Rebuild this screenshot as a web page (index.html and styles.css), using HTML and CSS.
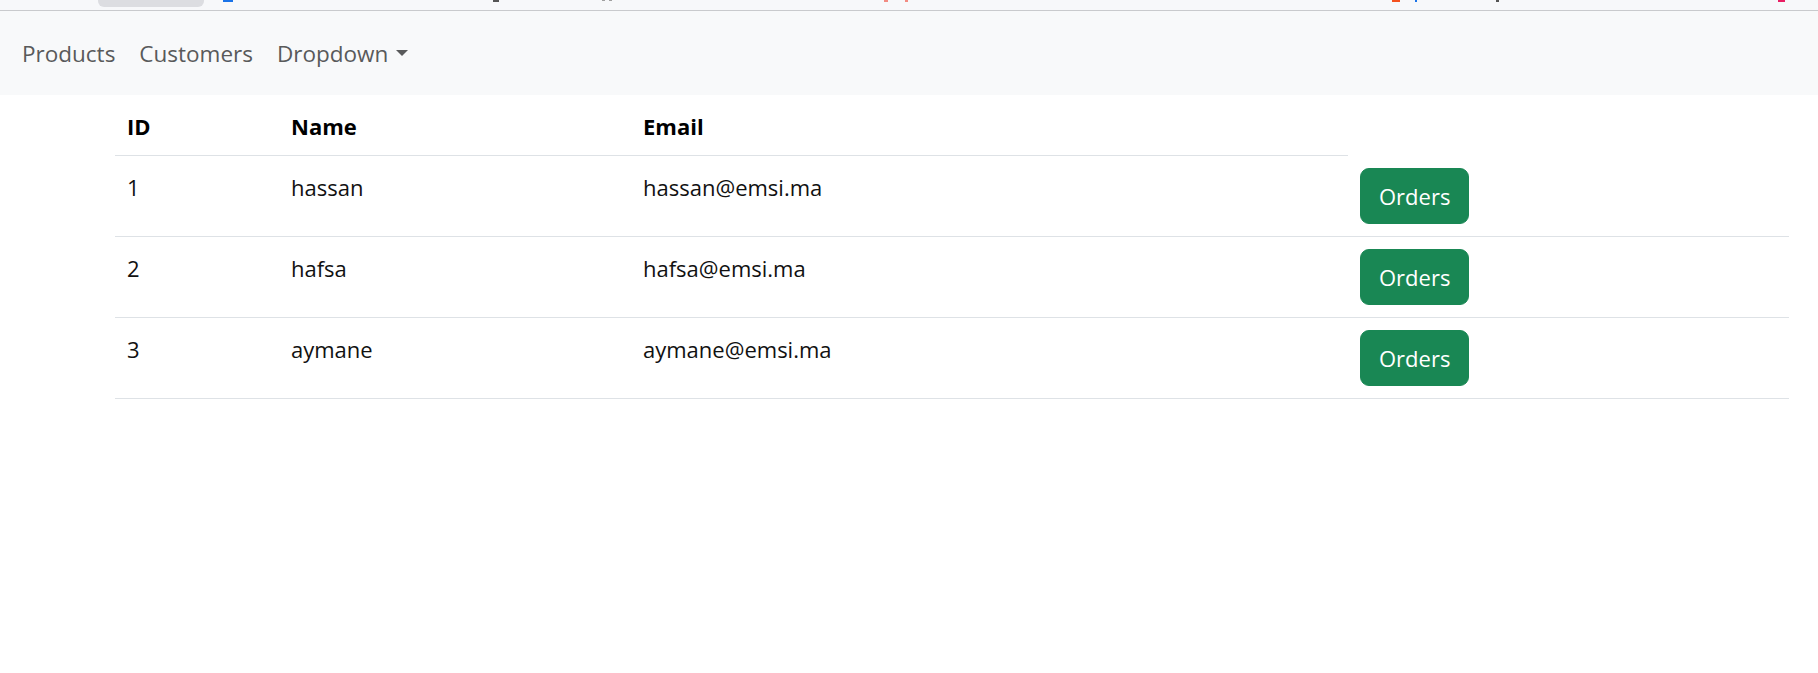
FILE: index.html
```html
<!DOCTYPE html>
<html lang="en">
<head>
<meta charset="utf-8">
<title>Customers</title>
<link rel="stylesheet" href="styles.css">
</head>
<body>
<div class="chrome">
  <span class="frag tab"></span>
  <span class="frag blue f1"></span>
  <span class="frag dark f2"></span>
  <span class="frag gray f3"></span>
  <span class="frag gray f4"></span>
  <span class="frag red f5"></span>
  <span class="frag red f6"></span>
  <span class="frag orange f7"></span>
  <span class="frag blue f8"></span>
  <span class="frag dark f9"></span>
  <span class="frag pink f10"></span>
</div>
<nav class="navbar">
  <a class="nav-link" href="#">Products</a>
  <a class="nav-link" href="#">Customers</a>
  <a class="nav-link dropdown-toggle" href="#">Dropdown</a>
</nav>
<table class="table">
  <colgroup>
    <col class="c-id"><col class="c-name"><col class="c-email"><col class="c-act">
  </colgroup>
  <thead>
    <tr><th>ID</th><th>Name</th><th>Email</th></tr>
  </thead>
  <tbody>
    <tr><td>1</td><td>hassan</td><td>hassan@emsi.ma</td><td class="act"><button class="btn">Orders</button></td></tr>
    <tr><td>2</td><td>hafsa</td><td>hafsa@emsi.ma</td><td class="act"><button class="btn">Orders</button></td></tr>
    <tr><td>3</td><td>aymane</td><td>aymane@emsi.ma</td><td class="act"><button class="btn">Orders</button></td></tr>
  </tbody>
</table>
</body>
</html>
```
FILE: styles.css
```css
html, body {
  margin: 0;
  padding: 0;
  background: #ffffff;
}
body {
  font-family: "Open Sans", "Noto Sans", sans-serif;
  font-size: 22px;
  line-height: 36px;
  color: #212529;
}

/* browser chrome remnant */
.chrome {
  height: 10px;
  background: #f7f8fa;
  border-bottom: 1px solid #c9cacd;
  display: flex;
  align-items: flex-start;
  overflow: hidden;
}
.frag { display: block; height: 2px; flex: none; }
.tab { margin-left: 98px; width: 106px; height: 7px; background: #dcdde1; border-radius: 0 0 6px 6px; }
.blue { background: #1a73e8; }
.dark { background: #555555; }
.gray { background: #a0a0a0; height: 1px; }
.red { background: #f28b82; }
.orange { background: #f4511e; }
.pink { background: #e91e63; }
.f1 { margin-left: 19px; width: 10px; }
.f2 { margin-left: 260px; width: 6px; }
.f3 { margin-left: 103px; width: 3px; }
.f4 { margin-left: 4px; width: 3px; }
.f5 { margin-left: 272px; width: 4px; }
.f6 { margin-left: 17px; width: 3px; }
.f7 { margin-left: 484px; width: 8px; }
.f8 { margin-left: 15px; width: 2px; }
.f9 { margin-left: 79px; width: 3px; }
.f10 { margin-left: 279px; width: 7px; }

/* navbar */
.navbar {
  background: #f8f9fa;
  display: flex;
  align-items: center;
  padding: 13px 0 11px 10px;
}
.nav-link {
  color: #595a5b;
  text-decoration: none;
  padding: 12px 12px;
  font-size: 22.5px;
  line-height: 36px;
}
.dropdown-toggle::after {
  content: "";
  display: inline-block;
  margin-left: 8px;
  vertical-align: 6px;
  border-top: 6px solid #595a5b;
  border-left: 6.5px solid transparent;
  border-right: 6.5px solid transparent;
}

/* table */
.table {
  margin-left: 115px;
  width: 1674px;
  border-collapse: collapse;
  table-layout: fixed;
}
.c-id { width: 164px; }
.c-name { width: 352px; }
.c-email { width: 717px; }
.c-act { width: 441px; }
.table th,
.table td {
  padding: 13px 12px 11px;
  text-align: left;
  vertical-align: top;
  border-bottom: 1px solid #dee2e6;
  line-height: 36px;
}
.table td.act {
  padding: 12px;
}
.table th {
  font-weight: 700;
  color: #000000;
}
.table td {
  color: #111111;
}
.btn {
  display: block;
  font-family: inherit;
  font-size: 22px;
  line-height: 36px;
  color: #ffffff;
  background: #198754;
  border: 1px solid #198754;
  border-radius: 9px;
  padding: 9px 18px;
  cursor: pointer;
}
```
